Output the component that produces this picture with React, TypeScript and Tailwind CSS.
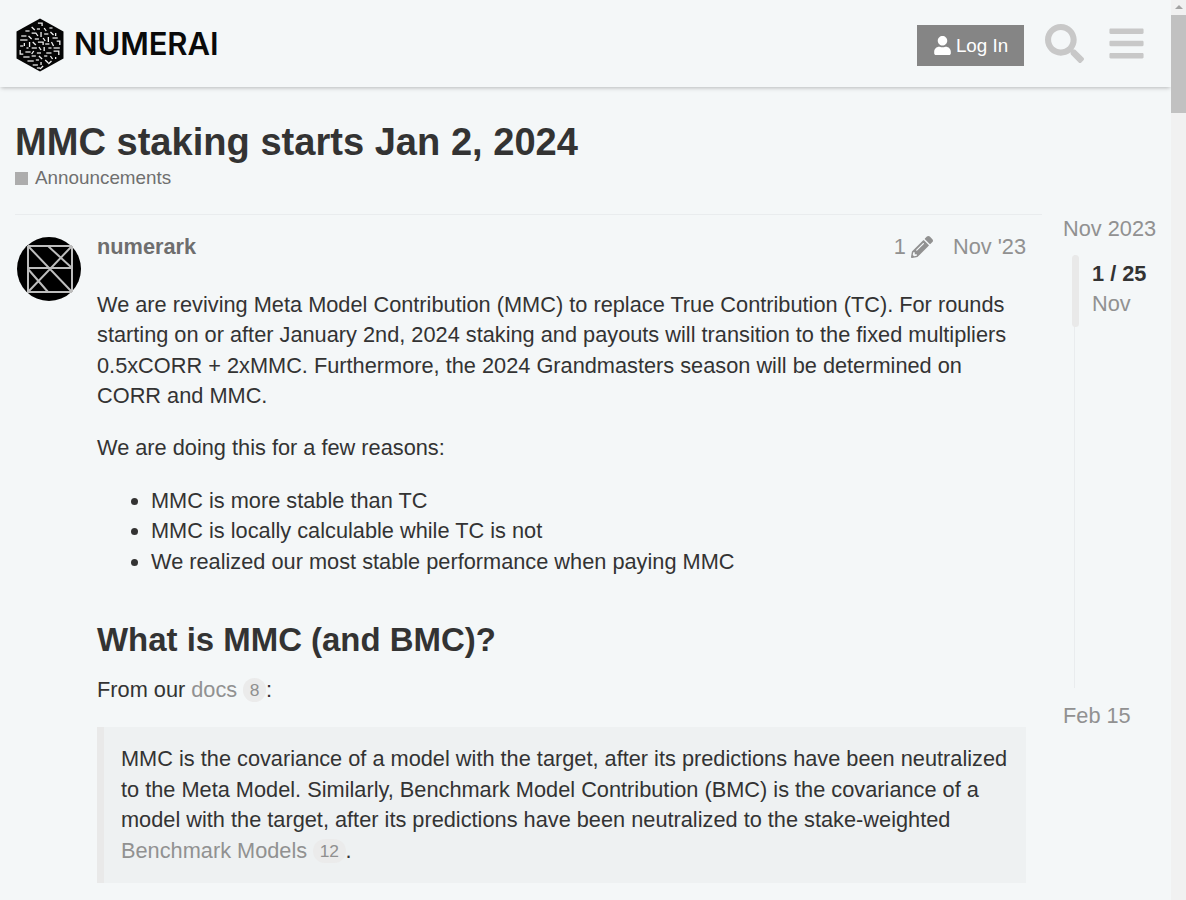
import React from 'react';
import { FaBars, FaPencilAlt, FaSearch, FaUser } from 'react-icons/fa';

const LOGO_MARKS = [
  'M21 5h4v3', 'M15 9l3 3', 'M20 11h3', 'M27 10l2 3', 'M32 10h3', 'M9 13h4', 'M15 15h4l2 3', 'M24 14v5', 'M27 16h4', 'M33 14l3 3', 'M38 15v3',
  'M5 18h5', 'M12 18l3 3', 'M18 21h4', 'M26 20l2 3', 'M31 19v5', 'M35 20h5', 'M4 22h7', 'M8 25v3', 'M13 24v5', 'M16 24l3 3', 'M21 24h5v3', 'M28 26h4', 'M34 24l2 4', 'M39 23h3v4',
  'M4 28h3', 'M10 30h2', 'M15 30h5', 'M22 29l2 3', 'M27 29v4', 'M31 30h3', 'M36 30h6', 'M4 32v4h3', 'M9 34h5', 'M17 33l-2 3', 'M20 35h4', 'M29 35h5', 'M36 33h5v4',
  'M7 39h6', 'M15 38h4', 'M22 38l3 3', 'M27 38h3', 'M33 38l2 3', 'M38 39v2', 'M11 43h6', 'M19 42h3', 'M24 44v3', 'M28 42l3 3', 'M34 43l-3 3', 'M16 47h5', 'M26 48l-3 3', 'M20 50h3',
];

const NumeraiLogo = () => (
  <div className="flex items-center">
    <svg width="48" height="54" viewBox="0 0 46 54" preserveAspectRatio="none" className="mt-[2px]">
      <path d="M23 0.5 L45.5 13.5 V40.5 L23 53.5 L0.5 40.5 V13.5 Z" fill="#050505" />
      {LOGO_MARKS.map((d) => (
        <path key={d} d={d} stroke="#f0f0f0" strokeWidth="1.25" fill="none" />
      ))}
    </svg>
    <span className="ml-[10px] font-['Inter',sans-serif] text-[31px] leading-none font-semibold tracking-[-0.1px] text-[#0a0a0a]">NUMERAI</span>
  </div>
);

const Avatar = () => (
  <svg width="64" height="64" viewBox="0 0 64 64" className="shrink-0">
    <circle cx="32" cy="32" r="32" fill="#000" />
    <g stroke="#bdbdbd" strokeWidth="2" fill="none">
      <path d="M11 9H55M10 31H55M10 55H55" />
      <path d="M11 9V55M55 9V55" />
      <path d="M11 9L55 55M31 9L55 31M55 9L11 55M11 32L31 55" />
    </g>
  </svg>
);

const Badge = ({ n }: { n: number }) => (
  <span className="ml-[6px] inline-block rounded-full bg-[#ebebeb] px-[6.5px] align-[1px] text-[17.4px] leading-[24px] text-[#8f8f8f]">{n}</span>
);

const Scrollbar = () => (
  <div className="flex w-[15px] shrink-0 flex-col items-center bg-[#f1f1f1]">
    <div className="mt-[5px] h-0 w-0 border-x-[4px] border-b-[4px] border-x-transparent border-b-[#a3a3a3]" />
    <div className="mt-[6px] h-[98px] w-full bg-[#c1c1c1]" />
  </div>
);

export default function App() {
  return (
    <div className="flex h-[900px] overflow-hidden bg-[#f4f7f8] font-['Liberation_Sans',Arial,sans-serif] text-[#333]">
      <div className="w-[1171px] shrink-0">
        <header className="flex h-[87px] items-center pr-[25px] pl-[16px] shadow-[0_2px_4px_-1px_rgba(0,0,0,0.25)]">
          <NumeraiLogo />
          <div className="mt-[4px] ml-auto flex items-center">
            <button className="flex h-[41px] w-[107px] items-center justify-center gap-[4px] bg-[#858585] text-[18.8px] text-white">
              <FaUser className="text-[19px]" />
              <span className="mt-[2px]">Log In</span>
            </button>
            <FaSearch className="mt-[-4px] ml-[21px] text-[39px] text-[#c8c8c8]" />
            <FaBars className="mt-[-4px] ml-[23px] text-[39px] text-[#c8c8c8]" />
          </div>
        </header>

        <div className="px-[15px] pt-[33px]">
          <h1 className="text-[38.1px] leading-[44px] font-bold text-[#333]">MMC staking starts Jan 2, 2024</h1>
          <div className="mt-[2px] flex items-center text-[18.85px] leading-[24px] text-[#6f6f6f]">
            <span className="mr-[7px] h-[13px] w-[13px] bg-[#adadad]" />
            Announcements
          </div>

          <div className="mt-[5px] flex">
            <article className="w-[1027px] shrink-0">
              <div className="mt-[19px] flex border-t border-[#e9ecee] pt-[22px] pr-[16px] pl-[2px]">
                <Avatar />
                <div className="ml-[16px] min-w-0 flex-1">
                  <div className="-mt-px flex items-center text-[21.75px] leading-[20px] text-[#919191]">
                    <span className="font-bold text-[#6e6e6e]">numerark</span>
                    <span className="ml-auto">1</span>
                    <FaPencilAlt className="ml-[5px] text-[22px]" />
                    <span className="ml-[20px]">Nov '23</span>
                  </div>
                  <div className="mt-[31.7px] text-[21.75px] leading-[30.45px]">
                    <p>
                      We are reviving Meta Model Contribution (MMC) to replace True Contribution (TC). For rounds starting on or after January 2nd, 2024 staking and payouts will transition to the fixed multipliers 0.5xCORR + 2xMMC. Furthermore, the 2024 Grandmasters season will be determined on CORR and MMC.
                    </p>
                    <p className="mt-[21.6px]">We are doing this for a few reasons:</p>
                    <ul className="mt-[22.2px] list-disc pl-[54px]">
                      <li>MMC is more stable than TC</li>
                      <li>MMC is locally calculable while TC is not</li>
                      <li>We realized our most stable performance when paying MMC</li>
                    </ul>
                    <h2 className="mt-[42.6px] text-[32.95px] leading-[40px] font-bold text-[#333]">What is MMC (and BMC)?</h2>
                    <p className="mt-[15px]">
                      From our <span className="text-[#919191]">docs</span>
                      <Badge n={8} />:
                    </p>
                    <blockquote className="mt-[22px] border-l-[7px] border-[#e9e9e9] bg-[#eef1f2] pt-[17.3px] pr-[16px] pb-[17px] pl-[17px]">
                      MMC is the covariance of a model with the target, after its predictions have been neutralized to the Meta Model. Similarly, Benchmark Model Contribution (BMC) is the covariance of a model with the target, after its predictions have been neutralized to the stake-weighted{' '}
                      <span className="text-[#919191]">Benchmark Models</span>
                      <Badge n={12} />.
                    </blockquote>
                  </div>
                </div>
              </div>
            </article>

            <aside className="mt-[19px] ml-[21px] text-[21.75px] whitespace-nowrap text-[#919191]">
              <div className="leading-[30px]">Nov 2023</div>
              <div className="relative mt-[11px] ml-[11px] h-[433px] border-l border-[#e9ecee]">
                <div className="absolute top-0 -left-[3px] h-[72px] w-[7px] rounded-full bg-[#e9e9e9]" />
                <div className="pt-[4px] pl-[17px]">
                  <div className="leading-[30px] font-bold text-[#333]">1 / 25</div>
                  <div className="leading-[30px]">Nov</div>
                </div>
              </div>
              <div className="mt-[13px] leading-[30px]">Feb 15</div>
            </aside>
          </div>
        </div>
      </div>
      <Scrollbar />
    </div>
  );
}
